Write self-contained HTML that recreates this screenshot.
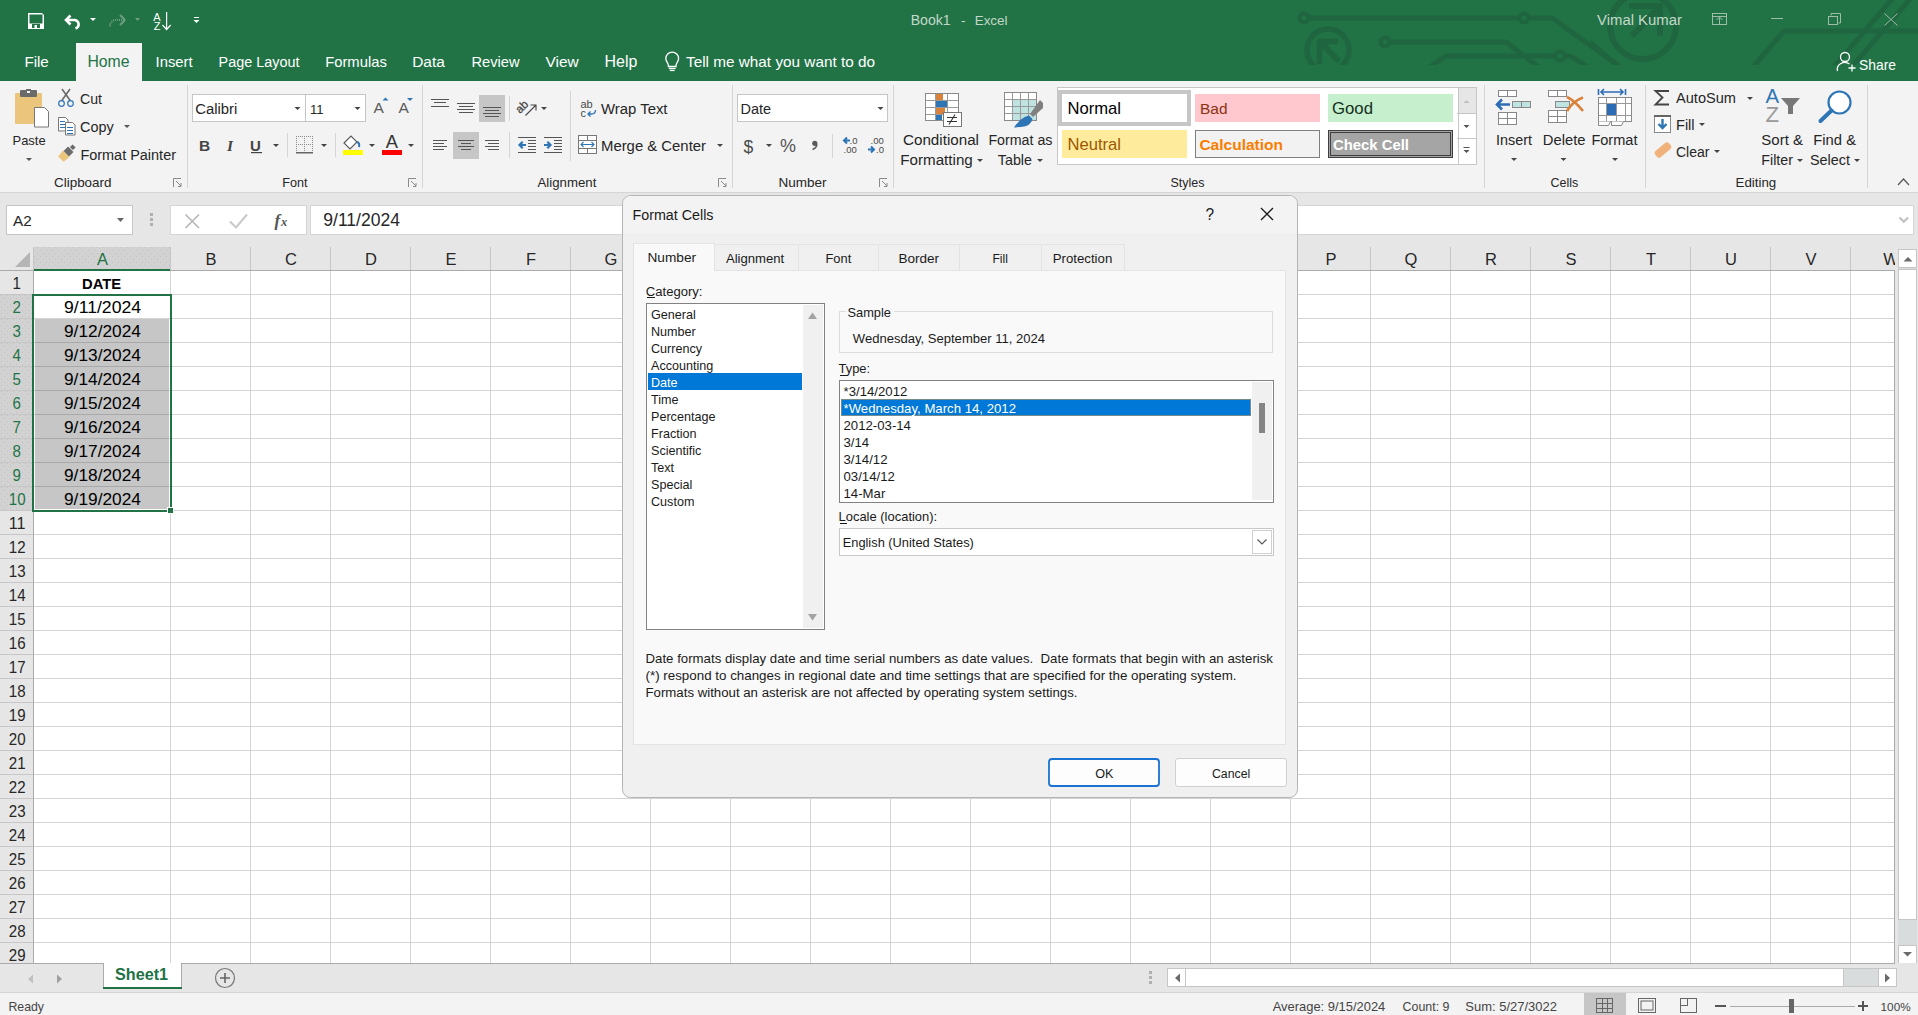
<!DOCTYPE html>
<html><head><meta charset="utf-8"><title>Book1 - Excel</title>
<style>
*{margin:0;padding:0}
html,body{width:1918px;height:1015px;overflow:hidden;background:#fff}
svg{position:absolute;left:0;top:0;font-family:"Liberation Sans",sans-serif}
text{white-space:pre}
</style></head>
<body>
<svg width="1918" height="1015" viewBox="0 0 1918 1015">
<defs>
<clipPath id="patclip"><rect x="0" y="0" width="1918" height="65"/></clipPath>
<pattern id="dots" width="6" height="6" patternUnits="userSpaceOnUse"><rect width="6" height="6" fill="#d2d2d2"/><rect x="1" y="1" width="1" height="1" fill="#c2c2c2"/><rect x="4" y="4" width="1" height="1" fill="#c2c2c2"/></pattern>
<pattern id="dotsB" width="3" height="3" patternUnits="userSpaceOnUse"><rect width="3" height="3" fill="#e6e6e6"/><rect x="1" y="1" width="1" height="1" fill="#d4d4d4"/></pattern>
<filter id="shadow" x="-5%" y="-5%" width="110%" height="110%"><feGaussianBlur stdDeviation="3"/></filter>
</defs>
<rect x="0" y="0" width="1918" height="81" fill="#217346" />
<g clip-path="url(#patclip)" stroke="#1f6540" stroke-width="5" fill="none" stroke-linejoin="round">
<path d="M1304 18H1552L1622 68" fill="none" stroke="#1f6540" stroke-width="5" />
<path d="M1385 42H1506L1540 68" fill="none" stroke="#1f6540" stroke-width="5" />
<path d="M1428 68L1446 56H1570L1590 68" fill="none" stroke="#1f6540" stroke-width="5" />
<circle cx="1304" cy="18" r="4" fill="#217346" stroke="none"/>
<circle cx="1304" cy="18" r="4.5" stroke-width="4"/>
<circle cx="1524" cy="18" r="4.5" stroke-width="4" fill="#217346"/>
<circle cx="1385" cy="42" r="4.5" stroke-width="4" fill="#217346"/>
<circle cx="1560" cy="56" r="4.5" stroke-width="4" fill="#217346"/>
<circle cx="1328" cy="50" r="21" stroke-width="5.5"/>
<path d="M1319.5 64V41.5H1338M1320 42L1339 61" fill="none" stroke="#1f6540" stroke-width="5.5" />
<circle cx="1643" cy="26" r="33" stroke-width="6"/>
<path d="M1629 6H1660V36M1660 6L1632 36" fill="none" stroke="#1f6540" stroke-width="6" />
<path d="M1590 42L1620 68" fill="none" stroke="#1f6540" stroke-width="5" />
<path d="M1752 68L1784 31H1918" fill="none" stroke="#1f6540" stroke-width="5" />
<path d="M1833 68L1893 -2" fill="none" stroke="#1f6540" stroke-width="5" />
<path d="M1851 68L1911 -2" fill="none" stroke="#1f6540" stroke-width="5" />
</g>
<path d="M28 13h14l2 2v14h-16z" fill="#ffffff" />
<rect x="29.5" y="14.5" width="13" height="9" fill="#217346" />
<rect x="32" y="24" width="8" height="4" fill="#217346" />
<rect x="34.5" y="25" width="2.5" height="3" fill="#ffffff" />
<path d="M67 20 H75 A5 4.5 0 0 1 75.5 28.5" fill="none" stroke="#ffffff" stroke-width="2.6" />
<path d="M70.5 15.5 L66 20 L70.5 24.5" fill="none" stroke="#ffffff" stroke-width="2.6" />
<path d="M90.0 18h6l-3.0 3z" fill="#ffffff"/>
<path d="M124 20 H116 A6 6 0 0 0 110 27" fill="none" stroke="#6f9e83" stroke-width="2" stroke-dasharray="1 1"/>
<path d="M125 20 L120 15 M125 20 L120 25" fill="none" stroke="#6f9e83" stroke-width="2" />
<path d="M135.0 18h5l-2.5 3z" fill="#6f9e83"/>
<text x="153.3" y="20.5" font-size="11" fill="#ffffff" >A</text>
<text x="153.8" y="30" font-size="11" fill="#ffffff" >Z</text>
<rect x="166" y="12" width="1.2" height="17" fill="#ffffff" />
<path d="M162.5 25 L166.6 29.5 L170.7 25" fill="none" stroke="#ffffff" stroke-width="1.2" />
<rect x="194" y="17" width="5" height="1" fill="#ffffff" />
<path d="M193.5 20h6l-3 3z" fill="#ffffff" />
<text x="910.7" y="25" font-size="14.11" fill="#c3d8ca" textLength="40.0" lengthAdjust="spacingAndGlyphs" >Book1</text>
<text x="961" y="25" font-size="13.51" fill="#c3d8ca" textLength="4.5" lengthAdjust="spacingAndGlyphs" >-</text>
<text x="974.7" y="25" font-size="13.41" fill="#c3d8ca" textLength="32.8" lengthAdjust="spacingAndGlyphs" >Excel</text>
<text x="1597" y="25" font-size="14.9" fill="#c3d8ca" textLength="85" lengthAdjust="spacingAndGlyphs" >Vimal Kumar</text>
<rect x="1712.5" y="13.5" width="14" height="11" fill="none" stroke="#9dbda9" stroke-width="1" />
<rect x="1712" y="16" width="14" height="1" fill="#9dbda9" />
<path d="M1719.5 25V18 M1716.5 20L1719.5 17L1722.5 20" fill="none" stroke="#9dbda9" stroke-width="1" />
<rect x="1771" y="18" width="12" height="1" fill="#9dbda9" />
<rect x="1828.5" y="16.5" width="9" height="8" fill="none" stroke="#9dbda9" stroke-width="1" />
<path d="M1831 15.5V13.5H1840.5V23H1838.5" fill="none" stroke="#9dbda9" stroke-width="1" />
<path d="M1884.5 13.5L1897.5 25.5M1897.5 13.5L1884.5 25.5" fill="none" stroke="#9dbda9" stroke-width="1" />
<rect x="76" y="43" width="66" height="38" fill="#f3f3f3" />
<text x="24.4" y="67" font-size="15.14" fill="#ffffff" textLength="24.4" lengthAdjust="spacingAndGlyphs" >File</text>
<text x="87.4" y="67" font-size="15.82" fill="#217346" textLength="42.2" lengthAdjust="spacingAndGlyphs" >Home</text>
<text x="155.6" y="67" font-size="14.8" fill="#ffffff" textLength="37.0" lengthAdjust="spacingAndGlyphs" >Insert</text>
<text x="218.6" y="67" font-size="14.39" fill="#ffffff" textLength="80.8" lengthAdjust="spacingAndGlyphs" >Page Layout</text>
<text x="325.2" y="67" font-size="14.78" fill="#ffffff" textLength="61.6" lengthAdjust="spacingAndGlyphs" >Formulas</text>
<text x="412.2" y="67" font-size="15.43" fill="#ffffff" textLength="32.6" lengthAdjust="spacingAndGlyphs" >Data</text>
<text x="471.5" y="67" font-size="14.67" fill="#ffffff" textLength="48.1" lengthAdjust="spacingAndGlyphs" >Review</text>
<text x="545.4000000000001" y="67" font-size="15.49" fill="#ffffff" textLength="33.3" lengthAdjust="spacingAndGlyphs" >View</text>
<text x="604.5" y="67" font-size="15.95" fill="#ffffff" textLength="32.8" lengthAdjust="spacingAndGlyphs" >Help</text>
<path d="M665.8 58.5a6.4 6.4 0 1 1 12.8 0c0 3-2.6 4.5-2.6 7v1h-7.6v-1c0-2.5-2.6-4-2.6-7z" fill="none" stroke="#ffffff" stroke-width="1.3" />
<rect x="668.8" y="67.8" width="6.8" height="1.3" fill="#ffffff" />
<rect x="669.8" y="69.8" width="4.8" height="1.3" fill="#ffffff" />
<text x="686" y="67" font-size="15.32" fill="#ffffff" textLength="189" lengthAdjust="spacingAndGlyphs" >Tell me what you want to do</text>
<circle cx="1845" cy="57" r="4.5" fill="none" stroke="#fff" stroke-width="1.3"/>
<path d="M1837.5 71 a7.5 7 0 0 1 12 -7" fill="none" stroke="#ffffff" stroke-width="1.3" />
<path d="M1852 64.5v7M1848.5 68h7" fill="none" stroke="#ffffff" stroke-width="1.3" />
<text x="1859" y="69.7" font-size="13.87" fill="#ffffff" textLength="37" lengthAdjust="spacingAndGlyphs" >Share</text>
<rect x="0" y="81" width="1918" height="111" fill="#f3f3f3" />
<rect x="0" y="192" width="1918" height="1" fill="#d5d5d5" />
<rect x="187" y="85" width="1" height="103" fill="#d5d5d5" />
<rect x="422" y="85" width="1" height="103" fill="#d5d5d5" />
<rect x="732" y="85" width="1" height="103" fill="#d5d5d5" />
<rect x="893" y="85" width="1" height="103" fill="#d5d5d5" />
<rect x="1484" y="85" width="1" height="103" fill="#d5d5d5" />
<rect x="1645" y="85" width="1" height="103" fill="#d5d5d5" />
<rect x="1867" y="85" width="1" height="103" fill="#d5d5d5" />
<text x="54.0" y="187" font-size="13.43" fill="#262626" textLength="57.5" lengthAdjust="spacingAndGlyphs" >Clipboard</text>
<text x="282.2" y="187" font-size="12.65" fill="#262626" textLength="25.3" lengthAdjust="spacingAndGlyphs" >Font</text>
<text x="537.5" y="187" font-size="13.22" fill="#262626" textLength="58.8" lengthAdjust="spacingAndGlyphs" >Alignment</text>
<text x="778.5" y="187" font-size="13.5" fill="#262626" textLength="48.0" lengthAdjust="spacingAndGlyphs" >Number</text>
<text x="1170.5" y="187" font-size="12.49" fill="#262626" textLength="34.0" lengthAdjust="spacingAndGlyphs" >Styles</text>
<text x="1550.5" y="187" font-size="12.46" fill="#262626" textLength="27.7" lengthAdjust="spacingAndGlyphs" >Cells</text>
<text x="1735.5" y="187" font-size="13.31" fill="#262626" textLength="40.7" lengthAdjust="spacingAndGlyphs" >Editing</text>
<path d="M173.5 187V178.5H181" fill="none" stroke="#8a8a8a" stroke-width="1" />
<path d="M176 181L181 186M181 183V186.5H178" fill="none" stroke="#8a8a8a" stroke-width="1" />
<path d="M408.5 187V178.5H416" fill="none" stroke="#8a8a8a" stroke-width="1" />
<path d="M411 181L416 186M416 183V186.5H413" fill="none" stroke="#8a8a8a" stroke-width="1" />
<path d="M718.5 187V178.5H726" fill="none" stroke="#8a8a8a" stroke-width="1" />
<path d="M721 181L726 186M726 183V186.5H723" fill="none" stroke="#8a8a8a" stroke-width="1" />
<path d="M879.5 187V178.5H887" fill="none" stroke="#8a8a8a" stroke-width="1" />
<path d="M882 181L887 186M887 183V186.5H884" fill="none" stroke="#8a8a8a" stroke-width="1" />
<rect x="15" y="93" width="27" height="31" fill="#ebc57c" rx="1"/>
<rect x="20" y="90" width="17" height="7" fill="#6b6b6b" rx="1"/>
<rect x="26" y="89" width="5" height="3" fill="#6b6b6b" />
<rect x="27" y="91" width="3" height="2" fill="#f3f3f3" />
<path d="M34.5 107.5h10l4 4v15.5h-14z" fill="#ffffff" stroke="#777777" stroke-width="1" />
<text x="12.5" y="145" font-size="12.94" fill="#262626" textLength="33.1" lengthAdjust="spacingAndGlyphs" >Paste</text>
<path d="M26.0 158h6l-3.0 3z" fill="#555"/>
<path d="M62 89L70.5 101M70 89L61.5 101" fill="none" stroke="#6b6b6b" stroke-width="1.6" />
<circle cx="61.5" cy="103.5" r="2.8" fill="none" stroke="#2e75b6" stroke-width="1.2"/>
<circle cx="70.5" cy="103.5" r="2.8" fill="none" stroke="#2e75b6" stroke-width="1.2"/>
<text x="80" y="103.7" font-size="14.14" fill="#262626" textLength="22" lengthAdjust="spacingAndGlyphs" >Cut</text>
<path d="M58.5 117.5h7l2.5 2.5v11h-9.5z" fill="#fff" stroke="#777" stroke-width="1" />
<path d="M65.5 122.5h7l2.5 2.5v10h-9.5z" fill="#fff" stroke="#777" stroke-width="1" />
<rect x="60" y="121" width="5" height="1" fill="#2e75b6" />
<rect x="60" y="124" width="5" height="1" fill="#2e75b6" />
<rect x="60" y="127" width="5" height="1" fill="#2e75b6" />
<rect x="67" y="127" width="6" height="1" fill="#2e75b6" />
<rect x="67" y="130" width="6" height="1" fill="#2e75b6" />
<rect x="67" y="133" width="6" height="1" fill="#2e75b6" />
<text x="80" y="131.5" font-size="14.39" fill="#262626" textLength="33.6" lengthAdjust="spacingAndGlyphs" >Copy</text>
<path d="M124.0 125h6l-3.0 3z" fill="#555"/>
<g transform="translate(67.5 152.5) rotate(-45) scale(0.85)"><path d="M-11 -4.5L-2 -5.5V5.5L-11 4.5z" fill="#ebc57c"/><rect x="-2" y="-4.5" width="7.5" height="9" fill="#6b6b6b"/><rect x="6.5" y="-2.5" width="4.5" height="5" fill="#6b6b6b"/></g>
<text x="80.4" y="160" font-size="14.46" fill="#262626" textLength="95.6" lengthAdjust="spacingAndGlyphs" >Format Painter</text>
<rect x="192.5" y="94.5" width="113" height="27" fill="#ffffff" stroke="#c6c6c6" stroke-width="1" />
<rect x="305.5" y="94.5" width="60" height="27" fill="#ffffff" stroke="#c6c6c6" stroke-width="1" />
<text x="195.2" y="113.7" font-size="14.89" fill="#262626" textLength="42.2" lengthAdjust="spacingAndGlyphs" >Calibri</text>
<path d="M294.5 107h6l-3.0 3z" fill="#444444"/>
<text x="310" y="113.7" font-size="13.1" fill="#262626" textLength="13.6" lengthAdjust="spacingAndGlyphs" >11</text>
<path d="M354.5 107h6l-3.0 3z" fill="#444444"/>
<text x="373.5" y="113" font-size="15.5" fill="#5a5a5a" >A</text>
<path d="M382.5 100.5l3-3 3 3z" fill="#2e75b6" />
<text x="398.5" y="113" font-size="15.5" fill="#5a5a5a" >A</text>
<path d="M407 98h6l-3 3z" fill="#2e75b6" />
<text x="199" y="151" font-size="15.5" fill="#444" font-weight="bold" >B</text>
<text x="227" y="151" font-size="15.5" fill="#444" font-weight="bold" font-style="italic" font-family="Liberation Serif">I</text>
<text x="250" y="151" font-size="15" fill="#444" font-weight="bold" >U</text>
<rect x="251" y="152" width="11" height="1.2" fill="#444" />
<path d="M273.0 144h6l-3.0 3z" fill="#444444"/>
<rect x="287" y="133" width="1" height="24" fill="#d5d5d5" />
<path d="M296 136h1v1h-1z M296 144h1v1h-1z M296 136h1v1h-1z M312 136h1v1h-1z M304 136h1v1h-1z M298 136h1v1h-1z M298 144h1v1h-1z M296 138h1v1h-1z M312 138h1v1h-1z M304 138h1v1h-1z M300 136h1v1h-1z M300 144h1v1h-1z M296 140h1v1h-1z M312 140h1v1h-1z M304 140h1v1h-1z M302 136h1v1h-1z M302 144h1v1h-1z M296 142h1v1h-1z M312 142h1v1h-1z M304 142h1v1h-1z M304 136h1v1h-1z M304 144h1v1h-1z M296 144h1v1h-1z M312 144h1v1h-1z M304 144h1v1h-1z M306 136h1v1h-1z M306 144h1v1h-1z M296 146h1v1h-1z M312 146h1v1h-1z M304 146h1v1h-1z M308 136h1v1h-1z M308 144h1v1h-1z M296 148h1v1h-1z M312 148h1v1h-1z M304 148h1v1h-1z M310 136h1v1h-1z M310 144h1v1h-1z M296 150h1v1h-1z M312 150h1v1h-1z M304 150h1v1h-1z M312 136h1v1h-1z M312 144h1v1h-1z M296 152h1v1h-1z M312 152h1v1h-1z M304 152h1v1h-1z" fill="#8a8a8a" />
<rect x="296" y="152" width="17" height="1.5" fill="#666" />
<path d="M321.0 144h6l-3.0 3z" fill="#444444"/>
<rect x="335" y="133" width="1" height="24" fill="#d5d5d5" />
<path d="M344 143l7-7 6 6-7 7z" fill="#fff" stroke="#555" stroke-width="1.1" />
<path d="M357 142q3 1 2 5" fill="none" stroke="#2e75b6" stroke-width="2" />
<rect x="343" y="150" width="20" height="5" fill="#ffff00" />
<path d="M369.0 144h6l-3.0 3z" fill="#444444"/>
<text x="385.8" y="148.4" font-size="18.29" fill="#333" textLength="12.2" lengthAdjust="spacingAndGlyphs" >A</text>
<rect x="382" y="150" width="20" height="5" fill="#ff0000" />
<path d="M408.0 144h6l-3.0 3z" fill="#444444"/>
<rect x="431" y="99" width="18" height="1" fill="#555" /><rect x="434" y="102" width="12" height="1" fill="#555" /><rect x="431" y="106" width="18" height="1" fill="#555" />
<rect x="457" y="103" width="18" height="1" fill="#555" /><rect x="459" y="106" width="14" height="1" fill="#555" /><rect x="457" y="109" width="18" height="1" fill="#555" /><rect x="459" y="112" width="14" height="1" fill="#555" />
<rect x="479" y="95" width="26" height="27" fill="#c6c6c6" />
<rect x="483" y="107" width="18" height="1" fill="#555" /><rect x="485" y="110" width="14" height="1" fill="#555" /><rect x="483" y="113" width="18" height="1" fill="#555" /><rect x="485" y="116" width="14" height="1" fill="#555" />
<rect x="509" y="96" width="1" height="25" fill="#d5d5d5" />
<text x="520" y="114" font-size="11.5" fill="#444" transform="rotate(-45 520 114)" stroke="#444" stroke-width="0.3">ab</text>
<path d="M525.5 115.5L535.5 105.5M530.5 105H536V110.5" fill="none" stroke="#444" stroke-width="1.1" />
<path d="M541.0 107h6l-3.0 3z" fill="#444444"/>
<rect x="570" y="91" width="1" height="70" fill="#d5d5d5" />
<text x="580.5" y="108" font-size="11" fill="#4a4a4a" >ab</text>
<text x="580.5" y="116.5" font-size="11" fill="#4a4a4a" >c</text>
<path d="M595.5 110q0 4-4 4h-3.5m2.5-2.5l-2.5 2.5 2.5 2.5" fill="none" stroke="#2e75b6" stroke-width="1.3" />
<text x="601" y="114.3" font-size="14.9" fill="#262626" textLength="66.5" lengthAdjust="spacingAndGlyphs" >Wrap Text</text>
<rect x="433" y="140" width="14" height="1" fill="#555" /><rect x="433" y="143" width="11" height="1" fill="#555" /><rect x="433" y="146" width="14" height="1" fill="#555" /><rect x="433" y="149" width="11" height="1" fill="#555" />
<rect x="453" y="132" width="26" height="27" fill="#c6c6c6" />
<rect x="458" y="140" width="16" height="1" fill="#555" /><rect x="461" y="143" width="10" height="1" fill="#555" /><rect x="458" y="146" width="16" height="1" fill="#555" /><rect x="461" y="149" width="10" height="1" fill="#555" />
<rect x="485" y="140" width="14" height="1" fill="#555" /><rect x="488" y="143" width="11" height="1" fill="#555" /><rect x="485" y="146" width="14" height="1" fill="#555" /><rect x="488" y="149" width="11" height="1" fill="#555" />
<rect x="509" y="132" width="1" height="26" fill="#d5d5d5" />
<rect x="518" y="137" width="18" height="1" fill="#555" /><rect x="528" y="140" width="8" height="1" fill="#555" /><rect x="528" y="143" width="8" height="1" fill="#555" /><rect x="528" y="146" width="8" height="1" fill="#555" /><rect x="528" y="149" width="8" height="1" fill="#555" /><rect x="518" y="152" width="18" height="1" fill="#555" />
<path d="M526 145h-6.5m3.2-3.2l-3.2 3.2 3.2 3.2" fill="none" stroke="#2e75b6" stroke-width="2.2" />
<rect x="544" y="137" width="18" height="1" fill="#555" /><rect x="554" y="140" width="8" height="1" fill="#555" /><rect x="554" y="143" width="8" height="1" fill="#555" /><rect x="554" y="146" width="8" height="1" fill="#555" /><rect x="554" y="149" width="8" height="1" fill="#555" /><rect x="544" y="152" width="18" height="1" fill="#555" />
<path d="M544 145h6.5m-3.2-3.2l3.2 3.2-3.2 3.2" fill="none" stroke="#2e75b6" stroke-width="2.2" />
<rect x="578.5" y="135.5" width="18" height="18" fill="#fff" stroke="#777" stroke-width="1" />
<rect x="579" y="140" width="17" height="1" fill="#777" />
<rect x="579" y="148" width="17" height="1" fill="#777" />
<rect x="587" y="136" width="1" height="4" fill="#777" />
<rect x="587" y="149" width="1" height="4" fill="#777" />
<path d="M581 144.5h13M583.5 142l-2.5 2.5 2.5 2.5M591.5 142l2.5 2.5-2.5 2.5" fill="none" stroke="#2e75b6" stroke-width="1.1" />
<text x="601" y="151" font-size="14.88" fill="#262626" textLength="105" lengthAdjust="spacingAndGlyphs" >Merge &amp; Center</text>
<path d="M717.0 144h6l-3.0 3z" fill="#444444"/>
<rect x="737.5" y="94.5" width="150" height="27" fill="#ffffff" stroke="#c6c6c6" stroke-width="1" />
<text x="740.5" y="114" font-size="14.44" fill="#262626" textLength="30.5" lengthAdjust="spacingAndGlyphs" >Date</text>
<path d="M877.5 107h6l-3.0 3z" fill="#444444"/>
<text x="743.5" y="152.5" font-size="17.5" fill="#4a4a4a" >$</text>
<path d="M766.0 144h6l-3.0 3z" fill="#444444"/>
<text x="780" y="152" font-size="17.99" fill="#555" textLength="16" lengthAdjust="spacingAndGlyphs" >%</text>
<circle cx="814.8" cy="143.3" r="2.6" fill="#5a5a5a"/>
<path d="M816.9 144.5Q816.5 148 812.5 149.5" fill="none" stroke="#5a5a5a" stroke-width="1.6" />
<rect x="832" y="134" width="1" height="24" fill="#d5d5d5" />
<text x="849.5" y="143.8" font-size="9.5" fill="#4a4a4a" >.0</text>
<text x="843.5" y="152.8" font-size="9.5" fill="#4a4a4a" >.00</text>
<path d="M850 140.5h-6m3-3l-3 3 3 3" fill="none" stroke="#2e75b6" stroke-width="2" />
<text x="870.5" y="143.8" font-size="9.5" fill="#4a4a4a" >.00</text>
<text x="876" y="152.8" font-size="9.5" fill="#4a4a4a" >.0</text>
<path d="M868 149.5h6m-3-3l3 3-3 3" fill="none" stroke="#2e75b6" stroke-width="2" />
<rect x="925.5" y="93.5" width="33" height="27" fill="#fff" stroke="#8a8a8a" stroke-width="1" />
<rect x="926" y="100" width="32" height="1" fill="#999" />
<rect x="926" y="107" width="32" height="1" fill="#999" />
<rect x="926" y="114" width="32" height="1" fill="#999" />
<rect x="935" y="94" width="1" height="26" fill="#999" />
<rect x="947" y="94" width="1" height="26" fill="#999" />
<rect x="936" y="94" width="7" height="6" fill="#d9823b" />
<rect x="936" y="101" width="11" height="6" fill="#2e75b6" />
<rect x="936" y="108" width="9" height="6" fill="#d9823b" />
<rect x="936" y="115" width="6" height="5" fill="#2e75b6" />
<rect x="943.5" y="112.5" width="18" height="14" fill="#fff" stroke="#777" stroke-width="1" />
<path d="M947 117.5h10M947 121.5h10M955 114.5L949 124.5" fill="none" stroke="#333" stroke-width="1.1" />
<text x="903" y="145" font-size="15.19" fill="#262626" textLength="76" lengthAdjust="spacingAndGlyphs" >Conditional</text>
<text x="900.3" y="165" font-size="15.17" fill="#262626" textLength="72.5" lengthAdjust="spacingAndGlyphs" >Formatting</text>
<path d="M977.0 159h6l-3.0 3z" fill="#444444"/>
<rect x="1004.5" y="92.5" width="32" height="28" fill="#fff" stroke="#8a8a8a" stroke-width="1" />
<rect x="1013" y="100" width="23" height="20" fill="#bfe3e0" />
<rect x="1005" y="99" width="31" height="1" fill="#999" />
<rect x="1005" y="106" width="31" height="1" fill="#999" />
<rect x="1005" y="113" width="31" height="1" fill="#999" />
<rect x="1012" y="93" width="1" height="27" fill="#999" />
<rect x="1020" y="93" width="1" height="27" fill="#999" />
<rect x="1028" y="93" width="1" height="27" fill="#999" />
<path d="M1040 100L1043 103V108L1033 117L1030 114Z" fill="#808080" />
<path d="M1029 115.5L1032.5 119Q1031 126 1021 127L1014 127.5Q1020 118 1029 115.5Z" fill="#2e75b6" />
<text x="988.4" y="145" font-size="14.24" fill="#262626" textLength="64.1" lengthAdjust="spacingAndGlyphs" >Format as</text>
<text x="997.8" y="165" font-size="14.31" fill="#262626" textLength="34.2" lengthAdjust="spacingAndGlyphs" >Table</text>
<path d="M1037.0 159h6l-3.0 3z" fill="#444444"/>
<rect x="1057.5" y="87.5" width="419" height="77" fill="#ffffff" stroke="#c6c6c6" stroke-width="1" />
<rect x="1058" y="90" width="133" height="36" fill="#c6c6c6" />
<rect x="1062" y="94" width="125" height="28" fill="#ffffff" />
<text x="1067.5" y="114.4" font-size="16.6" fill="#000" textLength="53.5" lengthAdjust="spacingAndGlyphs" >Normal</text>
<rect x="1195" y="94" width="125" height="28" fill="#ffc7ce" />
<text x="1200" y="114.4" font-size="15.46" fill="#8c3210" textLength="27.5" lengthAdjust="spacingAndGlyphs" >Bad</text>
<rect x="1328" y="94" width="125" height="28" fill="#c6efce" />
<text x="1332" y="114.4" font-size="16.76" fill="#14301c" textLength="41" lengthAdjust="spacingAndGlyphs" >Good</text>
<rect x="1062" y="130" width="125" height="28" fill="#ffeb9c" />
<text x="1067.5" y="150" font-size="16.6" fill="#9c5700" textLength="53.5" lengthAdjust="spacingAndGlyphs" >Neutral</text>
<rect x="1195.5" y="130.5" width="124" height="27" fill="#f2f2f2" stroke="#7f7f7f" stroke-width="1" />
<text x="1199.4" y="150" font-size="15.51" fill="#fa7d00" textLength="83.6" lengthAdjust="spacingAndGlyphs" font-weight="bold" >Calculation</text>
<rect x="1328.5" y="130.5" width="124" height="27" fill="#a5a5a5" stroke="#3f3f3f" stroke-width="1" />
<rect x="1330.5" y="132.5" width="120" height="23" fill="none" stroke="#3f3f3f" stroke-width="1" />
<text x="1333" y="150" font-size="14.86" fill="#ffffff" textLength="76" lengthAdjust="spacingAndGlyphs" font-weight="bold" >Check Cell</text>
<rect x="1458.5" y="87.5" width="18" height="77" fill="#ffffff" stroke="#c6c6c6" stroke-width="1" />
<rect x="1459" y="88" width="17" height="25" fill="#e6e6e6" />
<rect x="1457" y="113" width="20" height="1" fill="#c6c6c6" />
<rect x="1457" y="138" width="20" height="1" fill="#c6c6c6" />
<path d="M1463.5 103l3-3 3 3z" fill="#c0c0c0" />
<path d="M1463.5 125h6l-3.0 3z" fill="#555"/>
<rect x="1463.5" y="147" width="6" height="1" fill="#555" />
<path d="M1463.5 150h6l-3.0 3z" fill="#555"/>
<rect x="1498.5" y="90.5" width="18" height="6" fill="#fff" stroke="#888" stroke-width="1" />
<rect x="1507" y="90" width="1" height="7" fill="#888" />
<rect x="1498.5" y="112.5" width="18" height="12" fill="#fff" stroke="#888" stroke-width="1" />
<rect x="1507" y="112" width="1" height="13" fill="#888" />
<rect x="1498" y="118" width="19" height="1" fill="#888" />
<rect x="1512.5" y="101.5" width="18" height="6" fill="#bfe3e0" stroke="#888" stroke-width="1" />
<rect x="1521" y="101" width="1" height="7" fill="#888" />
<path d="M1510 104.5h-13m5-5l-5 5 5 5" fill="none" stroke="#2b6cb5" stroke-width="2.6" />
<text x="1496" y="145" font-size="14.4" fill="#262626" textLength="36" lengthAdjust="spacingAndGlyphs" >Insert</text>
<path d="M1511.0 158h6l-3.0 3z" fill="#444444"/>
<rect x="1548.5" y="90.5" width="18" height="6" fill="#fff" stroke="#888" stroke-width="1" />
<rect x="1557" y="90" width="1" height="7" fill="#888" />
<rect x="1548.5" y="110.5" width="18" height="12" fill="#fff" stroke="#888" stroke-width="1" />
<rect x="1557" y="110" width="1" height="13" fill="#888" />
<rect x="1548" y="116" width="19" height="1" fill="#888" />
<rect x="1555.5" y="101.5" width="14" height="6" fill="#bfe3e0" stroke="#888" stroke-width="1" />
<path d="M1567 97Q1575 101 1583 111M1583 97.5Q1573 101 1567 111" fill="none" stroke="#d9823b" stroke-width="2.6" />
<text x="1542.8" y="145" font-size="14.77" fill="#262626" textLength="42.7" lengthAdjust="spacingAndGlyphs" >Delete</text>
<path d="M1560.5 158h6l-3.0 3z" fill="#444444"/>
<path d="M1598.5 89v6M1625.5 89v6M1601 92h22M1604 89l-3 3 3 3M1620 89l3 3-3 3" fill="none" stroke="#2b6cb5" stroke-width="1.6" />
<rect x="1598.5" y="97.5" width="33" height="24" fill="#fff" stroke="#888" stroke-width="1" />
<rect x="1599" y="103" width="32" height="1" fill="#999" />
<rect x="1599" y="115" width="32" height="1" fill="#999" />
<rect x="1606" y="98" width="1" height="23" fill="#999" />
<rect x="1616" y="98" width="1" height="23" fill="#999" />
<rect x="1625" y="98" width="1" height="23" fill="#999" />
<rect x="1607" y="104" width="9" height="11" fill="#2b6cb5" />
<path d="M1598.5 121.5v4h10l2-4M1611.5 121.5v4h10l2-4" fill="#fff" stroke="#888" stroke-width="1" />
<text x="1591.4" y="145" font-size="14.56" fill="#262626" textLength="46.1" lengthAdjust="spacingAndGlyphs" >Format</text>
<path d="M1612.0 158h6l-3.0 3z" fill="#444444"/>
<path d="M1669 91h-13.5l7 6.5-7 7h13.5" fill="none" stroke="#444" stroke-width="1.8" />
<text x="1676" y="103.3" font-size="14.59" fill="#262626" textLength="60" lengthAdjust="spacingAndGlyphs" >AutoSum</text>
<path d="M1747.0 97h6l-3.0 3z" fill="#444444"/>
<rect x="1654.5" y="115.5" width="16" height="17" fill="#fff" stroke="#888" stroke-width="1" />
<rect x="1654" y="115" width="17" height="2" fill="#666" />
<path d="M1662.5 119v9m-4-4l4 4 4-4" fill="none" stroke="#2e75b6" stroke-width="2.4" />
<text x="1676" y="129.5" font-size="14.56" fill="#262626" textLength="18.6" lengthAdjust="spacingAndGlyphs" >Fill</text>
<path d="M1699.0 123h6l-3.0 3z" fill="#444444"/>
<rect x="1654" y="146" width="18" height="8" rx="3" fill="#f0b27a" transform="rotate(-40 1663 150)"/>
<text x="1676" y="156.5" font-size="14.02" fill="#262626" textLength="33.5" lengthAdjust="spacingAndGlyphs" >Clear</text>
<path d="M1714.0 150h6l-3.0 3z" fill="#444444"/>
<text x="1765.4" y="103" font-size="20.39" fill="#2e75b6" textLength="13.6" lengthAdjust="spacingAndGlyphs" >A</text>
<text x="1765.4" y="122" font-size="22.27" fill="#999" textLength="13.6" lengthAdjust="spacingAndGlyphs" >Z</text>
<path d="M1781 98h19l-7 8v8h-5v-8z" fill="#777" />
<text x="1761.3" y="145" font-size="15.01" fill="#262626" textLength="41.7" lengthAdjust="spacingAndGlyphs" >Sort &amp;</text>
<text x="1761.3" y="165" font-size="14.27" fill="#262626" textLength="31.7" lengthAdjust="spacingAndGlyphs" >Filter</text>
<path d="M1797.0 159h6l-3.0 3z" fill="#444444"/>
<circle cx="1839.5" cy="102.5" r="11" fill="#fff" stroke="#2e75b6" stroke-width="2.2"/>
<path d="M1831.5 110.5L1820.5 121" fill="none" stroke="#2e75b6" stroke-width="4" stroke-linecap="round"/>
<text x="1813.3" y="145" font-size="14.78" fill="#262626" textLength="42.7" lengthAdjust="spacingAndGlyphs" >Find &amp;</text>
<text x="1810" y="165" font-size="14.39" fill="#262626" textLength="40" lengthAdjust="spacingAndGlyphs" >Select</text>
<path d="M1854.0 159h6l-3.0 3z" fill="#444444"/>
<path d="M1898 185l5.5-6 5.5 6" fill="none" stroke="#555" stroke-width="1.2" />
<rect x="0" y="193" width="1918" height="54" fill="#e6e6e6" />
<rect x="6.5" y="205.5" width="126" height="29" fill="#ffffff" stroke="#c6c6c6" stroke-width="1" />
<text x="13" y="226" font-size="15.29" fill="#262626" textLength="18.7" lengthAdjust="spacingAndGlyphs" >A2</text>
<path d="M117.0 218h7l-3.5 4z" fill="#666"/>
<rect x="150" y="213" width="3" height="3" fill="#b0b0b0" />
<rect x="150" y="218" width="3" height="3" fill="#b0b0b0" />
<rect x="150" y="223" width="3" height="3" fill="#b0b0b0" />
<rect x="170.5" y="205.5" width="136" height="29" fill="#ffffff" stroke="#d5d5d5" stroke-width="1" />
<path d="M185.5 214.5L199 228M199 214.5L185.5 228" fill="none" stroke="#b5b5b5" stroke-width="1.6" />
<path d="M230 221.5L236 227.5L247 214.5" fill="none" stroke="#cacaca" stroke-width="2.2" />
<text x="274.5" y="226.3" font-size="17" fill="#555" font-weight="bold" font-style="italic" font-family="Liberation Serif">f</text>
<text x="281" y="226.3" font-size="12.5" fill="#555" font-weight="bold" font-style="italic" font-family="Liberation Serif">x</text>
<rect x="310.5" y="205.5" width="1603" height="29" fill="#ffffff" stroke="#d5d5d5" stroke-width="1" />
<text x="323.3" y="226" font-size="17.54" fill="#262626" textLength="76.7" lengthAdjust="spacingAndGlyphs" >9/11/2024</text>
<path d="M1899.5 217.5l4.3 4.3 4.3-4.3" fill="none" stroke="#c0c0c0" stroke-width="2.2" />
<rect x="0" y="247" width="1895" height="23" fill="#e6e6e6" />
<rect x="0" y="270" width="33" height="694" fill="#e6e6e6" />
<path d="M15 267H30V252z" fill="#b5b5b5" />
<rect x="34" y="247" width="136" height="23" fill="url(#dots)" />
<rect x="0" y="294" width="33" height="216" fill="url(#dots)" />
<rect x="33" y="247" width="1" height="23" fill="#c6c6c6" />
<rect x="170" y="247" width="1" height="23" fill="#c6c6c6" />
<rect x="250" y="247" width="1" height="23" fill="#c6c6c6" />
<rect x="330" y="247" width="1" height="23" fill="#c6c6c6" />
<rect x="410" y="247" width="1" height="23" fill="#c6c6c6" />
<rect x="490" y="247" width="1" height="23" fill="#c6c6c6" />
<rect x="570" y="247" width="1" height="23" fill="#c6c6c6" />
<rect x="650" y="247" width="1" height="23" fill="#c6c6c6" />
<rect x="730" y="247" width="1" height="23" fill="#c6c6c6" />
<rect x="810" y="247" width="1" height="23" fill="#c6c6c6" />
<rect x="890" y="247" width="1" height="23" fill="#c6c6c6" />
<rect x="970" y="247" width="1" height="23" fill="#c6c6c6" />
<rect x="1050" y="247" width="1" height="23" fill="#c6c6c6" />
<rect x="1130" y="247" width="1" height="23" fill="#c6c6c6" />
<rect x="1210" y="247" width="1" height="23" fill="#c6c6c6" />
<rect x="1290" y="247" width="1" height="23" fill="#c6c6c6" />
<rect x="1370" y="247" width="1" height="23" fill="#c6c6c6" />
<rect x="1450" y="247" width="1" height="23" fill="#c6c6c6" />
<rect x="1530" y="247" width="1" height="23" fill="#c6c6c6" />
<rect x="1610" y="247" width="1" height="23" fill="#c6c6c6" />
<rect x="1690" y="247" width="1" height="23" fill="#c6c6c6" />
<rect x="1770" y="247" width="1" height="23" fill="#c6c6c6" />
<rect x="1850" y="247" width="1" height="23" fill="#c6c6c6" />
<rect x="0" y="270" width="1895" height="1" fill="#ababab" />
<rect x="33" y="270" width="1" height="694" fill="#ababab" />
<rect x="0" y="294" width="33" height="1" fill="#c6c6c6" />
<rect x="0" y="318" width="33" height="1" fill="#c6c6c6" />
<rect x="0" y="342" width="33" height="1" fill="#c6c6c6" />
<rect x="0" y="366" width="33" height="1" fill="#c6c6c6" />
<rect x="0" y="390" width="33" height="1" fill="#c6c6c6" />
<rect x="0" y="414" width="33" height="1" fill="#c6c6c6" />
<rect x="0" y="438" width="33" height="1" fill="#c6c6c6" />
<rect x="0" y="462" width="33" height="1" fill="#c6c6c6" />
<rect x="0" y="486" width="33" height="1" fill="#c6c6c6" />
<rect x="0" y="510" width="33" height="1" fill="#c6c6c6" />
<rect x="0" y="534" width="33" height="1" fill="#c6c6c6" />
<rect x="0" y="558" width="33" height="1" fill="#c6c6c6" />
<rect x="0" y="582" width="33" height="1" fill="#c6c6c6" />
<rect x="0" y="606" width="33" height="1" fill="#c6c6c6" />
<rect x="0" y="630" width="33" height="1" fill="#c6c6c6" />
<rect x="0" y="654" width="33" height="1" fill="#c6c6c6" />
<rect x="0" y="678" width="33" height="1" fill="#c6c6c6" />
<rect x="0" y="702" width="33" height="1" fill="#c6c6c6" />
<rect x="0" y="726" width="33" height="1" fill="#c6c6c6" />
<rect x="0" y="750" width="33" height="1" fill="#c6c6c6" />
<rect x="0" y="774" width="33" height="1" fill="#c6c6c6" />
<rect x="0" y="798" width="33" height="1" fill="#c6c6c6" />
<rect x="0" y="822" width="33" height="1" fill="#c6c6c6" />
<rect x="0" y="846" width="33" height="1" fill="#c6c6c6" />
<rect x="0" y="870" width="33" height="1" fill="#c6c6c6" />
<rect x="0" y="894" width="33" height="1" fill="#c6c6c6" />
<rect x="0" y="918" width="33" height="1" fill="#c6c6c6" />
<rect x="0" y="942" width="33" height="1" fill="#c6c6c6" />
<rect x="0" y="966" width="33" height="1" fill="#c6c6c6" />
<rect x="34" y="271" width="1861" height="693" fill="#ffffff" />
<rect x="34" y="294" width="1861" height="1" fill="#d4d4d4" />
<rect x="34" y="318" width="1861" height="1" fill="#d4d4d4" />
<rect x="34" y="342" width="1861" height="1" fill="#d4d4d4" />
<rect x="34" y="366" width="1861" height="1" fill="#d4d4d4" />
<rect x="34" y="390" width="1861" height="1" fill="#d4d4d4" />
<rect x="34" y="414" width="1861" height="1" fill="#d4d4d4" />
<rect x="34" y="438" width="1861" height="1" fill="#d4d4d4" />
<rect x="34" y="462" width="1861" height="1" fill="#d4d4d4" />
<rect x="34" y="486" width="1861" height="1" fill="#d4d4d4" />
<rect x="34" y="510" width="1861" height="1" fill="#d4d4d4" />
<rect x="34" y="534" width="1861" height="1" fill="#d4d4d4" />
<rect x="34" y="558" width="1861" height="1" fill="#d4d4d4" />
<rect x="34" y="582" width="1861" height="1" fill="#d4d4d4" />
<rect x="34" y="606" width="1861" height="1" fill="#d4d4d4" />
<rect x="34" y="630" width="1861" height="1" fill="#d4d4d4" />
<rect x="34" y="654" width="1861" height="1" fill="#d4d4d4" />
<rect x="34" y="678" width="1861" height="1" fill="#d4d4d4" />
<rect x="34" y="702" width="1861" height="1" fill="#d4d4d4" />
<rect x="34" y="726" width="1861" height="1" fill="#d4d4d4" />
<rect x="34" y="750" width="1861" height="1" fill="#d4d4d4" />
<rect x="34" y="774" width="1861" height="1" fill="#d4d4d4" />
<rect x="34" y="798" width="1861" height="1" fill="#d4d4d4" />
<rect x="34" y="822" width="1861" height="1" fill="#d4d4d4" />
<rect x="34" y="846" width="1861" height="1" fill="#d4d4d4" />
<rect x="34" y="870" width="1861" height="1" fill="#d4d4d4" />
<rect x="34" y="894" width="1861" height="1" fill="#d4d4d4" />
<rect x="34" y="918" width="1861" height="1" fill="#d4d4d4" />
<rect x="34" y="942" width="1861" height="1" fill="#d4d4d4" />
<rect x="170" y="271" width="1" height="693" fill="#d4d4d4" />
<rect x="250" y="271" width="1" height="693" fill="#d4d4d4" />
<rect x="330" y="271" width="1" height="693" fill="#d4d4d4" />
<rect x="410" y="271" width="1" height="693" fill="#d4d4d4" />
<rect x="490" y="271" width="1" height="693" fill="#d4d4d4" />
<rect x="570" y="271" width="1" height="693" fill="#d4d4d4" />
<rect x="650" y="271" width="1" height="693" fill="#d4d4d4" />
<rect x="730" y="271" width="1" height="693" fill="#d4d4d4" />
<rect x="810" y="271" width="1" height="693" fill="#d4d4d4" />
<rect x="890" y="271" width="1" height="693" fill="#d4d4d4" />
<rect x="970" y="271" width="1" height="693" fill="#d4d4d4" />
<rect x="1050" y="271" width="1" height="693" fill="#d4d4d4" />
<rect x="1130" y="271" width="1" height="693" fill="#d4d4d4" />
<rect x="1210" y="271" width="1" height="693" fill="#d4d4d4" />
<rect x="1290" y="271" width="1" height="693" fill="#d4d4d4" />
<rect x="1370" y="271" width="1" height="693" fill="#d4d4d4" />
<rect x="1450" y="271" width="1" height="693" fill="#d4d4d4" />
<rect x="1530" y="271" width="1" height="693" fill="#d4d4d4" />
<rect x="1610" y="271" width="1" height="693" fill="#d4d4d4" />
<rect x="1690" y="271" width="1" height="693" fill="#d4d4d4" />
<rect x="1770" y="271" width="1" height="693" fill="#d4d4d4" />
<rect x="1850" y="271" width="1" height="693" fill="#d4d4d4" />
<rect x="1894" y="271" width="1" height="693" fill="#ababab" />
<rect x="35" y="319" width="134" height="190" fill="#c6c6c6" />
<rect x="34" y="509" width="136" height="1" fill="#ffffff" />
<rect x="35" y="342" width="134" height="1" fill="#a9a9a9" />
<rect x="35" y="366" width="134" height="1" fill="#a9a9a9" />
<rect x="35" y="390" width="134" height="1" fill="#a9a9a9" />
<rect x="35" y="414" width="134" height="1" fill="#a9a9a9" />
<rect x="35" y="438" width="134" height="1" fill="#a9a9a9" />
<rect x="35" y="462" width="134" height="1" fill="#a9a9a9" />
<rect x="35" y="486" width="134" height="1" fill="#a9a9a9" />
<rect x="32" y="294" width="2" height="218" fill="#217346" />
<rect x="170" y="294" width="2" height="213" fill="#217346" />
<rect x="32" y="294" width="140" height="2" fill="#217346" />
<rect x="32" y="510" width="136" height="2" fill="#217346" />
<rect x="34" y="269" width="136" height="2" fill="#217346" />
<rect x="167" y="507" width="7" height="7" fill="#ffffff" />
<rect x="168" y="508" width="5" height="5" fill="#217346" />
<text x="102.5" y="265" font-size="16.5" fill="#217346" text-anchor="middle" >A</text>
<text x="211" y="265" font-size="16.5" fill="#262626" text-anchor="middle" >B</text>
<text x="291" y="265" font-size="16.5" fill="#262626" text-anchor="middle" >C</text>
<text x="371" y="265" font-size="16.5" fill="#262626" text-anchor="middle" >D</text>
<text x="451" y="265" font-size="16.5" fill="#262626" text-anchor="middle" >E</text>
<text x="531" y="265" font-size="16.5" fill="#262626" text-anchor="middle" >F</text>
<text x="611" y="265" font-size="16.5" fill="#262626" text-anchor="middle" >G</text>
<text x="691" y="265" font-size="16.5" fill="#262626" text-anchor="middle" >H</text>
<text x="771" y="265" font-size="16.5" fill="#262626" text-anchor="middle" >I</text>
<text x="851" y="265" font-size="16.5" fill="#262626" text-anchor="middle" >J</text>
<text x="931" y="265" font-size="16.5" fill="#262626" text-anchor="middle" >K</text>
<text x="1011" y="265" font-size="16.5" fill="#262626" text-anchor="middle" >L</text>
<text x="1091" y="265" font-size="16.5" fill="#262626" text-anchor="middle" >M</text>
<text x="1171" y="265" font-size="16.5" fill="#262626" text-anchor="middle" >N</text>
<text x="1251" y="265" font-size="16.5" fill="#262626" text-anchor="middle" >O</text>
<text x="1331" y="265" font-size="16.5" fill="#262626" text-anchor="middle" >P</text>
<text x="1411" y="265" font-size="16.5" fill="#262626" text-anchor="middle" >Q</text>
<text x="1491" y="265" font-size="16.5" fill="#262626" text-anchor="middle" >R</text>
<text x="1571" y="265" font-size="16.5" fill="#262626" text-anchor="middle" >S</text>
<text x="1651" y="265" font-size="16.5" fill="#262626" text-anchor="middle" >T</text>
<text x="1731" y="265" font-size="16.5" fill="#262626" text-anchor="middle" >U</text>
<text x="1811" y="265" font-size="16.5" fill="#262626" text-anchor="middle" >V</text>
<text x="1891" y="265" font-size="16.5" fill="#262626" text-anchor="middle" >W</text>
<text x="16.8" y="289" font-size="16.5" fill="#262626" text-anchor="middle" textLength="8.4" lengthAdjust="spacingAndGlyphs">1</text>
<text x="16.8" y="313" font-size="16.5" fill="#217346" text-anchor="middle" textLength="8.4" lengthAdjust="spacingAndGlyphs">2</text>
<text x="16.8" y="337" font-size="16.5" fill="#217346" text-anchor="middle" textLength="8.4" lengthAdjust="spacingAndGlyphs">3</text>
<text x="16.8" y="361" font-size="16.5" fill="#217346" text-anchor="middle" textLength="8.4" lengthAdjust="spacingAndGlyphs">4</text>
<text x="16.8" y="385" font-size="16.5" fill="#217346" text-anchor="middle" textLength="8.4" lengthAdjust="spacingAndGlyphs">5</text>
<text x="16.8" y="409" font-size="16.5" fill="#217346" text-anchor="middle" textLength="8.4" lengthAdjust="spacingAndGlyphs">6</text>
<text x="16.8" y="433" font-size="16.5" fill="#217346" text-anchor="middle" textLength="8.4" lengthAdjust="spacingAndGlyphs">7</text>
<text x="16.8" y="457" font-size="16.5" fill="#217346" text-anchor="middle" textLength="8.4" lengthAdjust="spacingAndGlyphs">8</text>
<text x="16.8" y="481" font-size="16.5" fill="#217346" text-anchor="middle" textLength="8.4" lengthAdjust="spacingAndGlyphs">9</text>
<text x="17.2" y="505" font-size="16.5" fill="#217346" text-anchor="middle" textLength="16.8" lengthAdjust="spacingAndGlyphs">10</text>
<text x="17.2" y="529" font-size="16.5" fill="#262626" text-anchor="middle" textLength="16.8" lengthAdjust="spacingAndGlyphs">11</text>
<text x="17.2" y="553" font-size="16.5" fill="#262626" text-anchor="middle" textLength="16.8" lengthAdjust="spacingAndGlyphs">12</text>
<text x="17.2" y="577" font-size="16.5" fill="#262626" text-anchor="middle" textLength="16.8" lengthAdjust="spacingAndGlyphs">13</text>
<text x="17.2" y="601" font-size="16.5" fill="#262626" text-anchor="middle" textLength="16.8" lengthAdjust="spacingAndGlyphs">14</text>
<text x="17.2" y="625" font-size="16.5" fill="#262626" text-anchor="middle" textLength="16.8" lengthAdjust="spacingAndGlyphs">15</text>
<text x="17.2" y="649" font-size="16.5" fill="#262626" text-anchor="middle" textLength="16.8" lengthAdjust="spacingAndGlyphs">16</text>
<text x="17.2" y="673" font-size="16.5" fill="#262626" text-anchor="middle" textLength="16.8" lengthAdjust="spacingAndGlyphs">17</text>
<text x="17.2" y="697" font-size="16.5" fill="#262626" text-anchor="middle" textLength="16.8" lengthAdjust="spacingAndGlyphs">18</text>
<text x="17.2" y="721" font-size="16.5" fill="#262626" text-anchor="middle" textLength="16.8" lengthAdjust="spacingAndGlyphs">19</text>
<text x="17.2" y="745" font-size="16.5" fill="#262626" text-anchor="middle" textLength="16.8" lengthAdjust="spacingAndGlyphs">20</text>
<text x="17.2" y="769" font-size="16.5" fill="#262626" text-anchor="middle" textLength="16.8" lengthAdjust="spacingAndGlyphs">21</text>
<text x="17.2" y="793" font-size="16.5" fill="#262626" text-anchor="middle" textLength="16.8" lengthAdjust="spacingAndGlyphs">22</text>
<text x="17.2" y="817" font-size="16.5" fill="#262626" text-anchor="middle" textLength="16.8" lengthAdjust="spacingAndGlyphs">23</text>
<text x="17.2" y="841" font-size="16.5" fill="#262626" text-anchor="middle" textLength="16.8" lengthAdjust="spacingAndGlyphs">24</text>
<text x="17.2" y="865" font-size="16.5" fill="#262626" text-anchor="middle" textLength="16.8" lengthAdjust="spacingAndGlyphs">25</text>
<text x="17.2" y="889" font-size="16.5" fill="#262626" text-anchor="middle" textLength="16.8" lengthAdjust="spacingAndGlyphs">26</text>
<text x="17.2" y="913" font-size="16.5" fill="#262626" text-anchor="middle" textLength="16.8" lengthAdjust="spacingAndGlyphs">27</text>
<text x="17.2" y="937" font-size="16.5" fill="#262626" text-anchor="middle" textLength="16.8" lengthAdjust="spacingAndGlyphs">28</text>
<text x="17.2" y="961" font-size="16.5" fill="#262626" text-anchor="middle" textLength="16.8" lengthAdjust="spacingAndGlyphs">29</text>
<text x="101.5" y="289" font-size="15" fill="#000" font-weight="bold" text-anchor="middle" textLength="39" lengthAdjust="spacingAndGlyphs">DATE</text>
<text x="102.5" y="313" font-size="17" fill="#000" text-anchor="middle" textLength="77" lengthAdjust="spacingAndGlyphs">9/11/2024</text>
<text x="102.5" y="337" font-size="17" fill="#000" text-anchor="middle" textLength="77" lengthAdjust="spacingAndGlyphs">9/12/2024</text>
<text x="102.5" y="361" font-size="17" fill="#000" text-anchor="middle" textLength="77" lengthAdjust="spacingAndGlyphs">9/13/2024</text>
<text x="102.5" y="385" font-size="17" fill="#000" text-anchor="middle" textLength="77" lengthAdjust="spacingAndGlyphs">9/14/2024</text>
<text x="102.5" y="409" font-size="17" fill="#000" text-anchor="middle" textLength="77" lengthAdjust="spacingAndGlyphs">9/15/2024</text>
<text x="102.5" y="433" font-size="17" fill="#000" text-anchor="middle" textLength="77" lengthAdjust="spacingAndGlyphs">9/16/2024</text>
<text x="102.5" y="457" font-size="17" fill="#000" text-anchor="middle" textLength="77" lengthAdjust="spacingAndGlyphs">9/17/2024</text>
<text x="102.5" y="481" font-size="17" fill="#000" text-anchor="middle" textLength="77" lengthAdjust="spacingAndGlyphs">9/18/2024</text>
<text x="102.5" y="505" font-size="17" fill="#000" text-anchor="middle" textLength="77" lengthAdjust="spacingAndGlyphs">9/19/2024</text>
<rect x="1895" y="247" width="23" height="717" fill="#e6e6e6" />
<rect x="1898.5" y="249.5" width="18" height="18" fill="#ffffff" stroke="#c6c6c6" stroke-width="1" />
<path d="M1903.5 261.5l4.5-4.5 4.5 4.5z" fill="#6a6a6a" />
<rect x="1898" y="268" width="19" height="677" fill="#d9dcdd" />
<rect x="1898.5" y="269.5" width="18" height="650" fill="#ffffff" stroke="#c6c6c6" stroke-width="1" />
<rect x="1898.5" y="945.5" width="18" height="18" fill="#ffffff" stroke="#c6c6c6" stroke-width="1" />
<path d="M1903 952h9l-4.5 4.5z" fill="#6a6a6a" />
<rect x="0" y="963" width="1918" height="29" fill="#e6e6e6" />
<rect x="0" y="963" width="1895" height="1" fill="#ababab" />
<path d="M33 974.5l-5 4.5 5 4.5z" fill="#c0c0c0" />
<path d="M57 974.5l5 4.5-5 4.5z" fill="#a0a0a0" />
<rect x="103" y="963" width="79" height="25" fill="#ffffff" />
<rect x="103" y="963" width="1" height="25" fill="#ababab" />
<rect x="181" y="963" width="1" height="25" fill="#ababab" />
<rect x="103" y="987" width="79" height="2" fill="#217346" />
<text x="115" y="980" font-size="16.16" fill="#217346" textLength="53" lengthAdjust="spacingAndGlyphs" font-weight="bold" >Sheet1</text>
<circle cx="225" cy="978" r="9.5" fill="none" stroke="#777" stroke-width="1.2"/>
<path d="M225 973v10M220 978h10" fill="none" stroke="#666" stroke-width="1.6" />
<rect x="1149" y="971" width="3" height="3" fill="#b0b0b0" />
<rect x="1149" y="976" width="3" height="3" fill="#b0b0b0" />
<rect x="1149" y="981" width="3" height="3" fill="#b0b0b0" />
<rect x="1167.5" y="968.5" width="729" height="18" fill="#d9dcdd" stroke="#c6c6c6" stroke-width="1" />
<rect x="1167.5" y="968.5" width="18" height="18" fill="#ffffff" stroke="#c6c6c6" stroke-width="1" />
<path d="M1180 973.5l-5 4.5 5 4.5z" fill="#6a6a6a" />
<rect x="1185.5" y="968.5" width="658" height="18" fill="#ffffff" stroke="#c6c6c6" stroke-width="1" />
<rect x="1878.5" y="968.5" width="18" height="18" fill="#ffffff" stroke="#c6c6c6" stroke-width="1" />
<path d="M1885 973.5l5 4.5-5 4.5z" fill="#6a6a6a" />
<rect x="0" y="992" width="1918" height="23" fill="#f3f3f3" />
<rect x="0" y="992" width="1918" height="1" fill="#d5d5d5" />
<text x="8.4" y="1010.5" font-size="12.32" fill="#444" textLength="35.6" lengthAdjust="spacingAndGlyphs" >Ready</text>
<text x="1272.7" y="1010.8" font-size="12.93" fill="#444" textLength="112.6" lengthAdjust="spacingAndGlyphs" >Average: 9/15/2024</text>
<text x="1402.6" y="1010.8" font-size="12.41" fill="#444" textLength="46.9" lengthAdjust="spacingAndGlyphs" >Count: 9</text>
<text x="1465.3" y="1010.8" font-size="12.97" fill="#444" textLength="91.6" lengthAdjust="spacingAndGlyphs" >Sum: 5/27/3022</text>
<rect x="1584" y="993" width="42" height="22" fill="#c6c6c6" />
<rect x="1596.5" y="998.5" width="16" height="14" fill="none" stroke="#666" stroke-width="1" />
<rect x="1596" y="1003" width="17" height="1" fill="#666" />
<rect x="1596" y="1008" width="17" height="1" fill="#666" />
<rect x="1602" y="998" width="1" height="15" fill="#666" />
<rect x="1607" y="998" width="1" height="15" fill="#666" />
<rect x="1638.5" y="998.5" width="17" height="14" fill="none" stroke="#666" stroke-width="1" />
<rect x="1641" y="1001" width="12" height="9" fill="#f3f3f3" stroke="#666" stroke-width="1"/>
<rect x="1680.5" y="998.5" width="16" height="14" fill="none" stroke="#666" stroke-width="1" />
<rect x="1687" y="998" width="1" height="8" fill="#666" />
<rect x="1680" y="1005" width="8" height="1" fill="#666" />
<rect x="1715" y="1005" width="11" height="2" fill="#555" />
<rect x="1730" y="1006" width="125" height="1" fill="#aaaaaa" />
<rect x="1789" y="999" width="5" height="14" fill="#666" />
<rect x="1858" y="1005" width="10" height="2" fill="#555" />
<rect x="1862" y="1001" width="2" height="10" fill="#555" />
<text x="1880.6" y="1010.8" font-size="11.73" fill="#444" textLength="30.0" lengthAdjust="spacingAndGlyphs" >100%</text>
<rect x="622.5" y="195.5" width="675" height="602" rx="8" fill="#f0f0f0" stroke="#b4b4b4" stroke-width="1"/>
<path d="M623 233V204a8 8 0 0 1 8-8H1289a8 8 0 0 1 8 8V233z" fill="#f3f3f3"/>
<text x="632.5" y="219.5" font-size="14.29" fill="#1a1a1a" textLength="81.0" lengthAdjust="spacingAndGlyphs" >Format Cells</text>
<text x="1205.6" y="219.8" font-size="16.8" fill="#1a1a1a" textLength="8.6" lengthAdjust="spacingAndGlyphs" >?</text>
<path d="M1261 208L1273 220M1273 208L1261 220" fill="none" stroke="#1a1a1a" stroke-width="1.3" />
<rect x="714.5" y="244.5" width="84" height="26" fill="#f0f0f0" stroke="#e3e3e3" stroke-width="1" />
<text x="725.9" y="263" font-size="13.11" fill="#1a1a1a" textLength="58.3" lengthAdjust="spacingAndGlyphs" >Alignment</text>
<rect x="798.5" y="244.5" width="80" height="26" fill="#f0f0f0" stroke="#e3e3e3" stroke-width="1" />
<text x="825.5" y="263" font-size="12.84" fill="#1a1a1a" textLength="25.7" lengthAdjust="spacingAndGlyphs" >Font</text>
<rect x="878.5" y="244.5" width="81" height="26" fill="#f0f0f0" stroke="#e3e3e3" stroke-width="1" />
<text x="898.5" y="263" font-size="13.53" fill="#1a1a1a" textLength="40.6" lengthAdjust="spacingAndGlyphs" >Border</text>
<rect x="959.5" y="244.5" width="82" height="26" fill="#f0f0f0" stroke="#e3e3e3" stroke-width="1" />
<text x="992.5" y="263" font-size="12.06" fill="#1a1a1a" textLength="15.4" lengthAdjust="spacingAndGlyphs" >Fill</text>
<rect x="1041.5" y="244.5" width="83" height="26" fill="#f0f0f0" stroke="#e3e3e3" stroke-width="1" />
<text x="1052.7" y="263" font-size="13.24" fill="#1a1a1a" textLength="59.6" lengthAdjust="spacingAndGlyphs" >Protection</text>
<rect x="633.5" y="270.5" width="652" height="474" fill="#f9f9f9" stroke="#e3e3e3" stroke-width="1" />
<rect x="633.5" y="243.5" width="81" height="27" fill="#f9f9f9" stroke="#e3e3e3" stroke-width="1" />
<rect x="634" y="270" width="80" height="1" fill="#f9f9f9" />
<text x="647.5" y="262" font-size="13.67" fill="#1a1a1a" textLength="48.6" lengthAdjust="spacingAndGlyphs" >Number</text>
<text x="645.8" y="295.6" font-size="13.08" fill="#1a1a1a" textLength="56.7" lengthAdjust="spacingAndGlyphs" >Category:</text>
<rect x="647" y="297" width="8" height="1" fill="#1a1a1a" />
<rect x="646.5" y="303.5" width="178" height="326" fill="#ffffff" stroke="#828282" stroke-width="1" />
<rect x="803" y="305" width="20" height="323" fill="#f0f0f0" />
<path d="M808 319l4.5-6.5 4.5 6.5z" fill="#a3a3a3" />
<path d="M808 614l4.5 6.5 4.5-6.5z" fill="#a3a3a3" />
<rect x="648" y="373" width="154" height="17" fill="#0078d7" />
<text x="651" y="318.6" font-size="12.6" fill="#1a1a1a" >General</text>
<text x="651" y="335.6" font-size="12.6" fill="#1a1a1a" >Number</text>
<text x="651" y="352.6" font-size="12.6" fill="#1a1a1a" >Currency</text>
<text x="651" y="369.6" font-size="12.6" fill="#1a1a1a" >Accounting</text>
<text x="651" y="386.6" font-size="12.6" fill="#ffffff" >Date</text>
<text x="651" y="403.6" font-size="12.6" fill="#1a1a1a" >Time</text>
<text x="651" y="420.6" font-size="12.6" fill="#1a1a1a" >Percentage</text>
<text x="651" y="437.6" font-size="12.6" fill="#1a1a1a" >Fraction</text>
<text x="651" y="454.6" font-size="12.6" fill="#1a1a1a" >Scientific</text>
<text x="651" y="471.6" font-size="12.6" fill="#1a1a1a" >Text</text>
<text x="651" y="488.6" font-size="12.6" fill="#1a1a1a" >Special</text>
<text x="651" y="505.6" font-size="12.6" fill="#1a1a1a" >Custom</text>
<rect x="839.5" y="311.5" width="433" height="41" fill="none" stroke="#dcdcdc" stroke-width="1" />
<rect x="846" y="306" width="48" height="10" fill="#f9f9f9" />
<text x="847.5" y="317.3" font-size="12.8" fill="#1a1a1a" textLength="43.4" lengthAdjust="spacingAndGlyphs" >Sample</text>
<text x="852.8" y="343" font-size="13.05" fill="#1a1a1a" textLength="192.3" lengthAdjust="spacingAndGlyphs" >Wednesday, September 11, 2024</text>
<text x="838.5" y="373" font-size="12.92" fill="#1a1a1a" textLength="31.6" lengthAdjust="spacingAndGlyphs" >Type:</text>
<rect x="840" y="375" width="7" height="1" fill="#1a1a1a" />
<rect x="839.5" y="380.5" width="434" height="122" fill="#ffffff" stroke="#828282" stroke-width="1" />
<rect x="1252" y="382" width="20" height="118" fill="#f0f0f0" />
<rect x="1259" y="403" width="6" height="30" fill="#858585" />
<rect x="841" y="399" width="410" height="17" fill="#0078d7" />
<rect x="841.5" y="399.5" width="409" height="16" fill="none" stroke="#e8a040" stroke-width="1" stroke-dasharray="1 1"/>
<clipPath id="typeclip"><rect x="840" y="381" width="412" height="120"/></clipPath>
<g clip-path="url(#typeclip)">
<text x="843.5" y="395.7" font-size="13.2" fill="#1a1a1a" >*3/14/2012</text>
<text x="843.5" y="412.7" font-size="13.2" fill="#ffffff" >*Wednesday, March 14, 2012</text>
<text x="843.5" y="429.7" font-size="13.2" fill="#1a1a1a" >2012-03-14</text>
<text x="843.5" y="446.7" font-size="13.2" fill="#1a1a1a" >3/14</text>
<text x="843.5" y="463.7" font-size="13.2" fill="#1a1a1a" >3/14/12</text>
<text x="843.5" y="480.7" font-size="13.2" fill="#1a1a1a" >03/14/12</text>
<text x="843.5" y="497.7" font-size="13.2" fill="#1a1a1a" >14-Mar</text>
</g>
<text x="838.5" y="520.7" font-size="12.96" fill="#1a1a1a" textLength="98.7" lengthAdjust="spacingAndGlyphs" >Locale (location):</text>
<rect x="840" y="523" width="7" height="1" fill="#1a1a1a" />
<rect x="839.5" y="528.5" width="434" height="27" fill="#ffffff" stroke="#c8c8c8" stroke-width="1" />
<rect x="1252.5" y="530.5" width="19" height="23" fill="#ffffff" stroke="#d0d0d0" stroke-width="1" />
<path d="M1257.5 539.5l4.5 4.5 4.5-4.5" fill="none" stroke="#555" stroke-width="1.1" />
<text x="842.7" y="547" font-size="12.83" fill="#1a1a1a" textLength="131.2" lengthAdjust="spacingAndGlyphs" >English (United States)</text>
<text x="645.5" y="662.5" font-size="13.24" fill="#1a1a1a" textLength="627.5" lengthAdjust="spacingAndGlyphs" >Date formats display date and time serial numbers as date values.  Date formats that begin with an asterisk</text>
<text x="645.5" y="679.5" font-size="13.36" fill="#1a1a1a" textLength="591.0" lengthAdjust="spacingAndGlyphs" >(*) respond to changes in regional date and time settings that are specified for the operating system.</text>
<text x="645.5" y="696.5" font-size="13.23" fill="#1a1a1a" textLength="432.0" lengthAdjust="spacingAndGlyphs" >Formats without an asterisk are not affected by operating system settings.</text>
<rect x="1049" y="759" width="110" height="27" rx="3" fill="#fdfdfd" stroke="#1a73d0" stroke-width="1.8"/>
<text x="1095.2" y="777.7" font-size="12.67" fill="#1a1a1a" textLength="18.3" lengthAdjust="spacingAndGlyphs" >OK</text>
<rect x="1175.5" y="758.5" width="111" height="28" rx="2.5" fill="#fdfdfd" stroke="#d0d0d0" stroke-width="1"/>
<text x="1212.0" y="777.7" font-size="12.27" fill="#1a1a1a" textLength="38.2" lengthAdjust="spacingAndGlyphs" >Cancel</text>
</svg>
</body></html>
